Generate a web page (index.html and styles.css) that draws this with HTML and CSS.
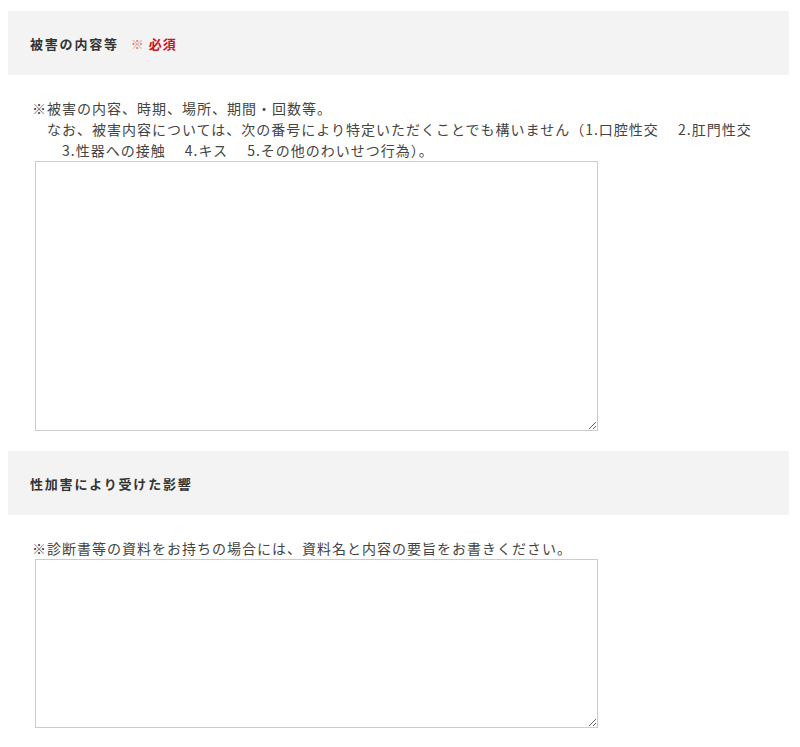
FILE: index.html
```html
<!DOCTYPE html>
<html lang="ja">
<head>
    <meta charset="UTF-8">
    <meta name="viewport" content="width=device-width, initial-scale=1.0">
    <title>被害の内容等</title>
    <link rel="stylesheet" href="styles.css">
</head>
<body>
    <div class="form">
        <div class="section-head">
            <span class="label">被害の内容等</span>
            <span class="req"><span class="mark">※</span> 必須</span>
        </div>
        <div class="field">
            <p class="note">※被害の内容、時期、場所、期間・回数等。<br>　なお、被害内容については、次の番号により特定いただくことでも構いません（1.口腔性交　 2.肛門性交<br>　　3.性器への接触　 4.キス　 5.その他のわいせつ行為）。</p>
            <textarea class="big" name="damage"></textarea>
        </div>

        <div class="section-head">
            <span class="label">性加害により受けた影響</span>
        </div>
        <div class="field">
            <p class="note">※診断書等の資料をお持ちの場合には、資料名と内容の要旨をお書きください。</p>
            <textarea class="small" name="effect"></textarea>
        </div>
    </div>
</body>
</html>
```

FILE: styles.css
```css
body {
    font-family: "Noto Sans CJK JP", "Noto Sans", sans-serif;
    background-color: #fff;
    color: #444;
    margin: 0px;
    padding: 0px 0px 0px 8px;
}
.form {
    width: 781px;
}
.section-head {
    background-color: #f3f3f3;
    height: 64px;
    margin-top: 11px;
    padding-left: 22px;
    display: flex;
    align-items: center;
}
.form .section-head:nth-of-type(3) {
    margin-top: 0px;
}
.label {
    font-size: 13px;
    font-weight: bold;
    letter-spacing: 1.8px;
    color: #333;
}
.req {
    margin-left: 12px;
    font-size: 13px;
    font-weight: bold;
    letter-spacing: 1px;
    color: #c8161d;
}
.req .mark {
    font-weight: normal;
    color: #e07a7e;
}
.field {
    padding: 23px 0px 20px 24px;
}
.note {
    margin: 0px;
    font-size: 14px;
    line-height: 21px;
    letter-spacing: 1px;
}
textarea {
    display: block;
    margin: 0px 0px 0px 3px;
    width: 563px;
    border: 1px solid #ccc;
    box-sizing: border-box;
    font-family: inherit;
}
.big {
    height: 270px;
}
.small {
    height: 169px;
}
```
